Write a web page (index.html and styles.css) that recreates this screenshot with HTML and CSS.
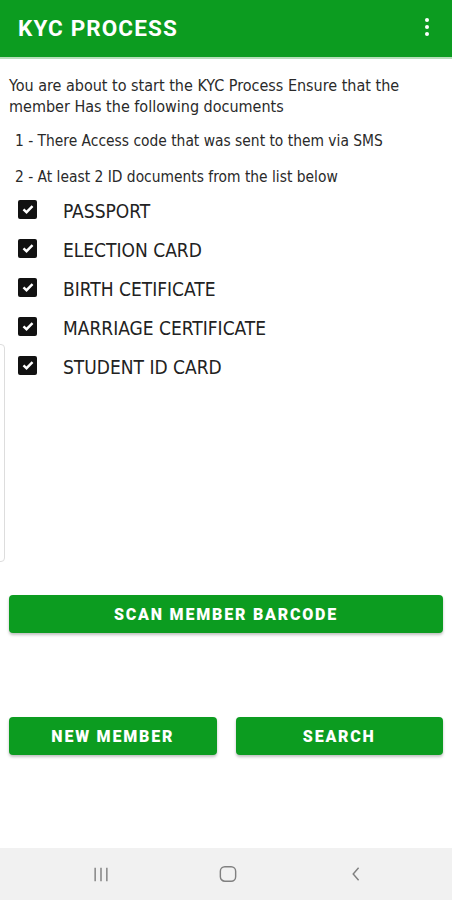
FILE: index.html
```html
<!DOCTYPE html>
<html lang="en">
<head>
    <meta charset="UTF-8">
    <meta name="viewport" content="width=device-width, initial-scale=1.0">
    <title>KYC Process</title>
    <link rel="stylesheet" href="styles.css">
</head>
<body>
    <!-- App bar -->
    <header class="appbar">
        <h1 class="title">KYC PROCESS</h1>
        <div class="menu">
            <span></span><span></span><span></span>
        </div>
    </header>

    <main class="content">
        <p class="intro">You are about to start the KYC Process Ensure that the member Has the following documents</p>
        <ul class="steps">
            <li>1 - There Access code that was sent to them via SMS</li>
            <li>2 - At least 2 ID documents from the list below</li>
        </ul>

        <div class="docs-wrap">
            <div class="side-card"></div>
            <ul class="docs">
                <li><span class="check"><svg viewBox="0 0 12 12"><path d="M2.6 6.2l2.3 2.2 4.5-4.6"/></svg></span>PASSPORT</li>
                <li><span class="check"><svg viewBox="0 0 12 12"><path d="M2.6 6.2l2.3 2.2 4.5-4.6"/></svg></span>ELECTION CARD</li>
                <li><span class="check"><svg viewBox="0 0 12 12"><path d="M2.6 6.2l2.3 2.2 4.5-4.6"/></svg></span>BIRTH CETIFICATE</li>
                <li><span class="check"><svg viewBox="0 0 12 12"><path d="M2.6 6.2l2.3 2.2 4.5-4.6"/></svg></span>MARRIAGE CERTIFICATE</li>
                <li><span class="check"><svg viewBox="0 0 12 12"><path d="M2.6 6.2l2.3 2.2 4.5-4.6"/></svg></span>STUDENT ID CARD</li>
            </ul>
        </div>

        <button class="btn btn-wide">SCAN MEMBER BARCODE</button>

        <div class="btn-row">
            <button class="btn">NEW MEMBER</button>
            <button class="btn">SEARCH</button>
        </div>
    </main>

    <!-- System navigation -->
    <nav class="navbar">
        <svg class="nav-icon" viewBox="0 0 20 20"><path d="M3.5 3v15M10 3v15M16.5 3v15"/></svg>
        <svg class="nav-icon" viewBox="0 0 20 20"><rect x="1.5" y="2" width="17" height="16" rx="5"/></svg>
        <svg class="nav-icon" viewBox="0 0 20 20"><path d="M14 3l-6 7 6 7"/></svg>
    </nav>
</body>
</html>
```

FILE: styles.css
```css
:root {
    --green: #0c9c20;
    --text: #222;
    --nav: #f1f1f1;
}

* {
    margin: 0;
    padding: 0;
    box-sizing: border-box;
}

body {
    width: 452px;
    min-height: 900px;
    display: flex;
    flex-direction: column;
    background-color: #fff;
    color: var(--text);
    font-family: "DejaVu Sans Condensed", "Roboto", sans-serif;
}

.appbar {
    height: 59px;
    display: flex;
    align-items: center;
    justify-content: space-between;
    padding: 0 23px 2px 18px;
    background-color: var(--green);
    border-bottom: 2px solid #b7dfba;
}

.title {
    color: #fff;
    font-family: "Roboto", sans-serif;
    font-size: 22.5px;
    font-weight: bold;
    letter-spacing: 1.1px;
}

.menu {
    display: flex;
    flex-direction: column;
    gap: 3px;
    margin-top: -1px;
}

.menu span {
    width: 4px;
    height: 4px;
    border-radius: 50%;
    background-color: #fff;
}

.content {
    padding: 0 9px;
    flex: 1;
}

.intro {
    margin-top: 16px;
    padding-right: 30px;
    font-size: 16px;
    line-height: 21px;
    color: #2a2a2a;
}

.steps {
    list-style: none;
    padding-left: 6px;
    font-size: 15.4px;
    color: #2a2a2a;
}

.steps li {
    margin-top: 14px;
    line-height: 20px;
}

.steps li + li {
    margin-top: 16px;
}

.docs-wrap {
    position: relative;
}

.side-card {
    position: absolute;
    left: -30px;
    top: 153px;
    width: 26px;
    height: 218px;
    border: 1px solid #ddd;
    border-radius: 4px;
}

.docs {
    list-style: none;
    padding-left: 9px;
    margin-top: 4px;
}

.docs li {
    display: flex;
    align-items: center;
    height: 39px;
    font-size: 19px;
    color: #222;
}

.check {
    width: 19px;
    height: 19px;
    margin-right: 26px;
    margin-top: -3px;
    border-radius: 2px;
    background-color: #111;
    display: flex;
    align-items: center;
    justify-content: center;
}

.check svg {
    width: 16px;
    height: 16px;
    fill: none;
    stroke: #fff;
    stroke-width: 1.8;
}

.btn {
    display: block;
    height: 38px;
    border: none;
    border-radius: 4px;
    background-color: var(--green);
    color: #fff;
    font-family: "Roboto", sans-serif;
    font-size: 16px;
    font-weight: 900;
    letter-spacing: 1.8px;
    box-shadow: 0 2px 3px rgba(0, 0, 0, 0.25);
    cursor: pointer;
}

.btn-wide {
    width: 100%;
    margin-top: 209px;
}

.btn-row {
    display: grid;
    grid-template-columns: 1fr 1fr;
    gap: 19px;
    margin-top: 84px;
}

.navbar {
    height: 52px;
    display: flex;
    align-items: center;
    justify-content: space-between;
    padding: 0 88px 0 92px;
    background-color: var(--nav);
}

.nav-icon {
    width: 18px;
    height: 18px;
    fill: none;
    stroke: #808080;
    stroke-width: 1.6;
}
```
